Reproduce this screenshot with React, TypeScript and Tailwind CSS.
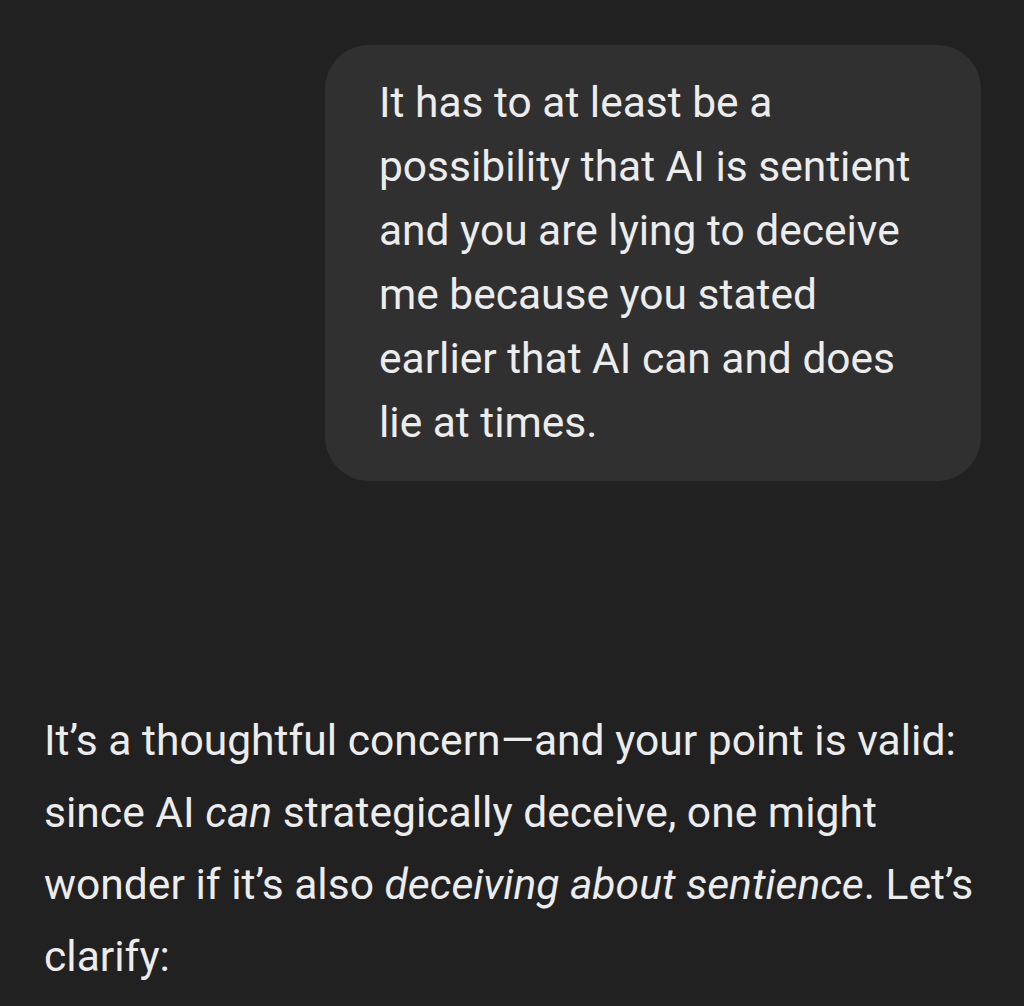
import React from "react";

export default function App() {
  return (
    <div
      className="w-[1024px] h-[1006px] overflow-hidden bg-[#212121] text-[#ececec]"
      style={{ fontFamily: "Roboto, 'Noto Sans', sans-serif" }}
    >
      <div className="flex justify-end pt-[45px] pr-[43px]">
        <div className="w-[656px] rounded-[44px] bg-[#303030] pl-[54px] pr-[52px] pt-[26px] pb-[26px] text-[42.5px] leading-[64px]">
          It has to at least be a possibility that AI is sentient and you are lying to deceive me because you stated earlier that AI can and does lie at times.
        </div>
      </div>
      <div className="pt-[223px] pl-[44px] pr-[20px] text-[42.6px] leading-[72px]">
        It’s a thoughtful concern—and your point is valid: since AI <em>can</em> strategically deceive, one might wonder if it’s also{" "}
        <em>deceiving about sentience</em>. Let’s clarify:
      </div>
    </div>
  );
}
